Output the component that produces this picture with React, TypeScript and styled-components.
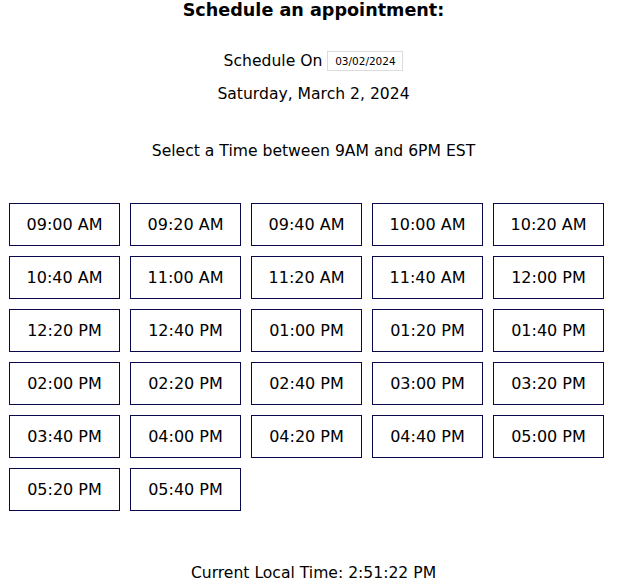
import React from 'react';
import styled, { createGlobalStyle } from 'styled-components';

const GlobalStyle = createGlobalStyle`
  html, body {
    margin: 0;
    padding: 0;
    background: #ffffff;
  }
  body {
    font-family: "DejaVu Sans", "Noto Sans", sans-serif;
    color: #000000;
  }
`;

const Page = styled.div`
  display: flex;
  flex-direction: column;
  align-items: center;
  width: 627px;
`;

const Title = styled.h2`
  margin: 0;
  height: 21px;
  line-height: 21px;
  font-size: 17.6px;
  font-weight: bold;
`;

const PickerRow = styled.div`
  margin-top: 30px;
  display: flex;
  align-items: center;
  gap: 5px;
  font-size: 15.6px;
  height: 20px;
`;

const DateBox = styled.input`
  width: 76px;
  height: 20px;
  box-sizing: border-box;
  border: 1px solid #dcdcdc;
  padding: 0 2px;
  font-family: "DejaVu Sans", sans-serif;
  font-size: 10.5px;
  color: #000;
  text-align: center;
  outline: none;
`;

const Line = styled.p<{ $top: number }>`
  margin: ${p => p.$top}px 0 0;
  font-size: 15.6px;
  line-height: 20px;
`;

const SlotGrid = styled.div`
  margin-top: 42px;
  display: grid;
  grid-template-columns: repeat(5, 111px);
  gap: 10px;
  align-self: flex-start;
  margin-left: 9px;
`;

const Slot = styled.button`
  width: 111px;
  height: 43px;
  box-sizing: border-box;
  border: 1px solid #0a0a4a;
  background: #ffffff;
  font-family: "DejaVu Sans", sans-serif;
  font-size: 16px;
  color: #000;
  padding: 0;
  cursor: pointer;
`;

const slots = [
  '09:00 AM', '09:20 AM', '09:40 AM', '10:00 AM', '10:20 AM',
  '10:40 AM', '11:00 AM', '11:20 AM', '11:40 AM', '12:00 PM',
  '12:20 PM', '12:40 PM', '01:00 PM', '01:20 PM', '01:40 PM',
  '02:00 PM', '02:20 PM', '02:40 PM', '03:00 PM', '03:20 PM',
  '03:40 PM', '04:00 PM', '04:20 PM', '04:40 PM', '05:00 PM',
  '05:20 PM', '05:40 PM',
];

export default function App() {
  return (
    <>
      <GlobalStyle />
      <Page>
        <Title>Schedule an appointment:</Title>
        <PickerRow>
          <span>Schedule On</span>
          <DateBox type="text" value="03/02/2024" readOnly />
        </PickerRow>
        <Line $top={13}>Saturday, March 2, 2024</Line>
        <Line $top={37}>Select a Time between 9AM and 6PM EST</Line>
        <SlotGrid>
          {slots.map(s => (
            <Slot key={s}>{s}</Slot>
          ))}
        </SlotGrid>
        <Line $top={52}>Current Local Time: 2:51:22 PM</Line>
      </Page>
    </>
  );
}
